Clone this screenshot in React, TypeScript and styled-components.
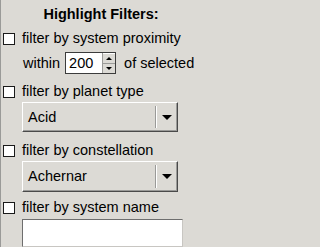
import React from "react";
import styled, { createGlobalStyle } from "styled-components";

const Global = createGlobalStyle`
  html, body {
    margin: 0;
    padding: 0;
    background: #dcdad5;
  }
  body {
    font-family: "Liberation Sans", Arial, sans-serif;
    font-size: 14.5px;
    color: #000;
  }
`;

const Panel = styled.div`
  width: 199px;
  height: 247px;
  border-left: 1px solid #9a9a98;
  background: #dcdad5;
  padding: 6px 0 0 2px;
  box-sizing: border-box;
  display: flex;
  flex-direction: column;
  overflow: hidden;
`;

const Title = styled.div`
  font-weight: bold;
  text-align: center;
  line-height: 17px;
  margin-bottom: 7px;
`;

const CheckRow = styled.label<{ $top?: number }>`
  display: flex;
  align-items: center;
  line-height: 17px;
  margin-top: ${(p) => p.$top ?? 0}px;
  white-space: nowrap;
`;

const Box = styled.span`
  width: 12px;
  height: 12px;
  box-sizing: border-box;
  border: 1px solid #1a1a1a;
  background: #fff;
  flex: none;
  margin-right: 7px;
`;

const WithinRow = styled.div`
  display: flex;
  align-items: baseline;
  line-height: 17px;
  margin: 5px 0 0 20px;
  white-space: nowrap;
`;

const Spin = styled.span`
  display: inline-flex;
  align-items: stretch;
  height: 22px;
  width: 51px;
  margin: 0 8px 0 5px;
  box-sizing: border-box;
  border: 1px solid #3c3c3c;
  background: #fff;
`;

const SpinText = styled.span`
  flex: 1;
  padding: 2px 0 0 3px;
  line-height: 17px;
`;

const SpinButtons = styled.span`
  width: 12px;
  display: flex;
  flex-direction: column;
  background: #dcdad5;
  border-left: 1px solid #9a9a98;
`;

const SpinBtn = styled.span<{ $down?: boolean }>`
  flex: 1;
  display: flex;
  align-items: center;
  justify-content: center;
  border-top: ${(p) => (p.$down ? "1px solid #9a9a98" : "1px solid #fff")};
  &::after {
    content: "";
    border-left: 3px solid transparent;
    border-right: 3px solid transparent;
    ${(p) => (p.$down ? "border-top: 3px solid #000;" : "border-bottom: 3px solid #000;")}
  }
`;

const Combo = styled.div<{ $h: number }>`
  display: flex;
  align-items: center;
  width: 156px;
  height: ${(p) => p.$h}px;
  margin: 2px 0 0 19px;
  box-sizing: border-box;
  border-top: 1px solid #fff;
  border-left: 1px solid #fff;
  border-right: 1px solid #4a4a4a;
  border-bottom: 1px solid #4a4a4a;
  box-shadow: inset -1px -1px 0 #9a9a98;
  background: #dcdad5;
  flex: none;
`;

const ComboText = styled.span`
  flex: 1;
  padding-left: 5px;
  line-height: 17px;
`;

const Separator = styled.span`
  align-self: stretch;
  margin: 3px 0;
  width: 1px;
  border-left: 1px solid #9a9a98;
  background: #fff;
`;

const Arrow = styled.span`
  width: 20px;
  display: flex;
  justify-content: center;
  &::after {
    content: "";
    border-left: 5px solid transparent;
    border-right: 5px solid transparent;
    border-top: 5px solid #000;
  }
`;

const TextField = styled.div`
  width: 161px;
  height: 28px;
  margin: 3px 0 0 19px;
  box-sizing: border-box;
  border-top: 1px solid #6e6e6e;
  border-left: 1px solid #6e6e6e;
  border-right: 1px solid #c8c6c2;
  border-bottom: 1px solid #c8c6c2;
  background: #fff;
  flex: none;
`;

const Check = ({ label, top }: { label: string; top?: number }) => (
  <CheckRow $top={top}>
    <Box />
    {label}
  </CheckRow>
);

export default function App() {
  return (
    <>
      <Global />
      <Panel>
        <Title>Highlight Filters:</Title>
        <Check label="filter by system proximity" />
        <WithinRow>
          within
          <Spin>
            <SpinText>200</SpinText>
            <SpinButtons>
              <SpinBtn />
              <SpinBtn $down />
            </SpinButtons>
          </Spin>
          of selected
        </WithinRow>
        <Check label="filter by planet type" top={9} />
        <Combo $h={30}>
          <ComboText>Acid</ComboText>
          <Separator />
          <Arrow />
        </Combo>
        <Check label="filter by constellation" top={10} />
        <Combo $h={31}>
          <ComboText>Achernar</ComboText>
          <Separator />
          <Arrow />
        </Combo>
        <Check label="filter by system name" top={7} />
        <TextField />
      </Panel>
    </>
  );
}
